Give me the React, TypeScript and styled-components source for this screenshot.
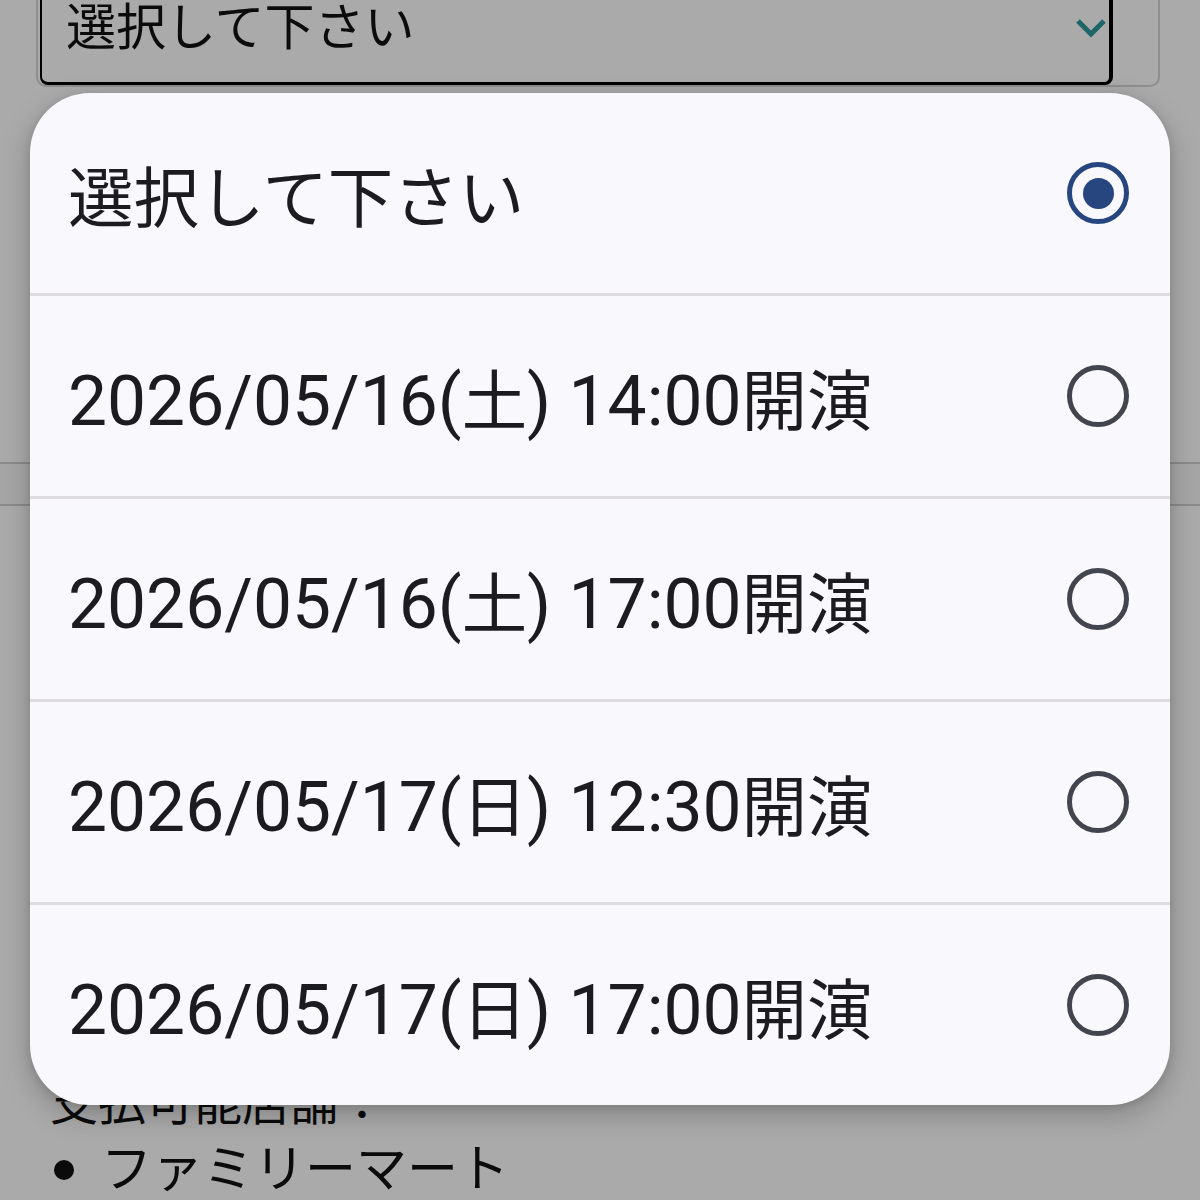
import React from "react";
import styled, { createGlobalStyle } from "styled-components";

const Global = createGlobalStyle`
  html, body { margin: 0; padding: 0; background: #ffffff; }
  body { font-family: "Roboto", "Noto Sans CJK JP", sans-serif; overflow: hidden; }
  #root { width: 1200px; height: 1200px; position: relative; overflow: hidden; }
`;

const Page = styled.div`
  width: 1200px;
  height: 1200px;
  display: flex;
  flex-direction: column;
  background: #ffffff;
`;

const SelectOuter = styled.div`
  margin: -50px 40px 0 36px;
  height: 136px;
  border: 2px solid #d6d6d6;
  border-radius: 10px;
  display: flex;
`;

const SelectBox = styled.div`
  width: 1073px;
  height: 133px;
  margin-left: 2px;
  box-sizing: border-box;
  border: 2px solid #000;
  border-right-width: 4px;
  border-bottom-width: 3px;
  border-radius: 8px;
  display: flex;
  align-items: flex-start;
  justify-content: space-between;
  padding: 0 2px 0 24px;
`;

const SelectText = styled.span`
  font-size: 50px;
  line-height: 60px;
  color: #111;
  margin-top: 44px;
`;

const ChevronSvg = styled.svg`
  margin-top: 64px;
  flex-shrink: 0;
`;

const Band = styled.div`
  margin-top: 375px;
  height: 48px;
  border-top: 2px solid #d2d2d2;
  border-bottom: 2px solid #d2d2d2;
  background: #f9f9f9;
`;

const Info = styled.div`
  margin-top: 568px;
  padding-left: 50px;
  display: flex;
  flex-direction: column;
  gap: 6px;
  color: #111;
  font-size: 48px;
  line-height: 60px;
`;

const ListItem = styled.div`
  display: flex;
  align-items: center;
  font-size: 51px;
  gap: 27px;
`;

const Bullet = styled.span`
  width: 20px;
  height: 20px;
  border-radius: 50%;
  background: #111;
  margin-left: 4px;
`;

const Scrim = styled.div`
  position: absolute;
  inset: 0;
  background: rgba(0, 0, 0, 0.335);
`;

const Dialog = styled.div`
  position: absolute;
  left: 30px;
  top: 93px;
  width: 1140px;
  background: #f8f8fd;
  border-radius: 60px;
  overflow: hidden;
  box-shadow: 0 10px 30px rgba(0, 0, 0, 0.22), 0 2px 8px rgba(0, 0, 0, 0.12);
  display: flex;
  flex-direction: column;
`;

const Row = styled.div<{ $last?: boolean }>`
  height: 200px;
  display: flex;
  align-items: center;
  justify-content: space-between;
  padding: 0 41px 0 38px;
  border-bottom: ${(p) => (p.$last ? "none" : "3px solid #dedbe3")};
`;

const Label = styled.span`
  font-size: 69.5px;
  color: #1c1b1f;
  white-space: nowrap;
`;

const Cjk = styled.span`
  font-size: 0.942em;
`;

const Radio = styled.span<{ $checked?: boolean }>`
  width: 62px;
  height: 62px;
  flex-shrink: 0;
  box-sizing: border-box;
  border-radius: 50%;
  border: 5.5px solid ${(p) => (p.$checked ? "#27467f" : "#43454e")};
  display: flex;
  align-items: center;
  justify-content: center;
  &::after {
    content: "";
    display: ${(p) => (p.$checked ? "block" : "none")};
    width: 31px;
    height: 31px;
    border-radius: 50%;
    background: #27467f;
  }
`;

const Chevron = () => (
  <ChevronSvg width="32" height="24" viewBox="0 0 32 24">
    <path d="M3 3 L16 16 L29 3" fill="none" stroke="#2a9a9d" strokeWidth="5" />
  </ChevronSvg>
);

const renderText = (text: string) =>
  text.split(/([\u3000-\u9fff\uff00-\uffef]+)/).map((part, i) =>
    /[\u3000-\u9fff\uff00-\uffef]/.test(part) ? <Cjk key={i}>{part}</Cjk> : part
  );

const options = [
  "選択して下さい",
  "2026/05/16(土) 14:00開演",
  "2026/05/16(土) 17:00開演",
  "2026/05/17(日) 12:30開演",
  "2026/05/17(日) 17:00開演",
];

export default function App() {
  return (
    <>
      <Global />
      <Page>
        <SelectOuter>
          <SelectBox>
            <SelectText>選択して下さい</SelectText>
            <Chevron />
          </SelectBox>
        </SelectOuter>
        <Band />
        <Info>
          <span>支払可能店舗：</span>
          <ListItem>
            <Bullet />
            <span>ファミリーマート</span>
          </ListItem>
        </Info>
      </Page>
      <Scrim />
      <Dialog>
        {options.map((o, i) => (
          <Row key={o} $last={i === options.length - 1}>
            <Label>{renderText(o)}</Label>
            <Radio $checked={i === 0} />
          </Row>
        ))}
      </Dialog>
    </>
  );
}
